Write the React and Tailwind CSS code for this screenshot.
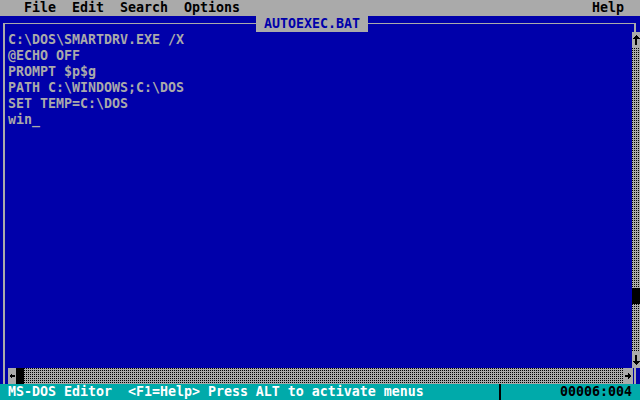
import React from "react";

const lines = [
  "C:\\DOS\\SMARTDRV.EXE /X",
  "@ECHO OFF",
  "PROMPT $p$g",
  "PATH C:\\WINDOWS;C:\\DOS",
  "SET TEMP=C:\\DOS",
  "win_",
];

function Dots({ className }) {
  return (
    <div
      className={
        "bg-[#aaaaaa] bg-[conic-gradient(at_1px_1px,#aaaaaa_270deg,#000000_0)] bg-[length:2px_2px] " +
        (className || "")
      }
    />
  );
}

function VLine({ color }) {
  return (
    <div className="w-2 h-full pl-[3px] shrink-0">
      <div className={"w-[2px] h-full " + color} />
    </div>
  );
}

function Arrow({ dir }) {
  const shapes = {
    up: (
      <>
        <polygon points="4,3 8,7 0,7" />
        <rect x="3" y="7" width="2" height="6" />
      </>
    ),
    down: (
      <>
        <rect x="3" y="3" width="2" height="6" />
        <polygon points="0,9 8,9 4,13" />
      </>
    ),
    left: (
      <>
        <polygon points="1,8 4,5 4,11" />
        <rect x="4" y="7" width="3" height="2" />
      </>
    ),
    right: (
      <>
        <rect x="1" y="7" width="3" height="2" />
        <polygon points="7,8 4,5 4,11" />
      </>
    ),
  };
  return (
    <svg width="8" height="16" viewBox="0 0 8 16" shapeRendering="crispEdges" fill="#000">
      {shapes[dir]}
    </svg>
  );
}

export default function App() {
  return (
    <div className="w-[640px] h-[400px] overflow-hidden bg-[#0000aa] font-['DejaVu_Sans_Mono',monospace] font-bold text-[13.29px] leading-4 flex flex-col">
      {/* Menu bar */}
      <div className="h-4 bg-[#aaaaaa] text-black flex whitespace-pre shrink-0">
        <span className="flex-1">{"   File  Edit  Search  Options"}</span>
        <span>{"Help  "}</span>
      </div>

      {/* Title row */}
      <div className="h-4 flex shrink-0">
        <div className="w-[256px] pl-[3px] pt-[7px]">
          <div className="h-full border-t border-l-2 border-[#aaaaaa]" />
        </div>
        <div className="w-[112px] bg-[#aaaaaa] text-[#0000aa] whitespace-pre">{" AUTOEXEC.BAT "}</div>
        <div className="flex-1 pr-[4px] pt-[7px]">
          <div className="h-full border-t border-r-2 border-[#aaaaaa]" />
        </div>
      </div>

      {/* Editor body */}
      <div className="h-[336px] flex shrink-0">
        <VLine color="bg-[#aaaaaa]" />
        <div className="flex-1 text-[#aaaaaa] whitespace-pre">
          {lines.map((l, i) => (
            <div key={i} className="h-4">
              {l}
            </div>
          ))}
        </div>
        <div className="w-2 flex flex-col shrink-0">
          <div className="h-4 bg-[#aaaaaa]">
            <Arrow dir="up" />
          </div>
          <Dots className="h-[240px]" />
          <div className="h-4 bg-black" />
          <Dots className="h-[48px]" />
          <div className="h-4 bg-[#aaaaaa]">
            <Arrow dir="down" />
          </div>
        </div>
      </div>

      {/* Horizontal scrollbar */}
      <div className="h-4 flex shrink-0">
        <VLine color="bg-[#aaaaaa]" />
        <div className="w-2 bg-[#aaaaaa]">
          <Arrow dir="left" />
        </div>
        <div className="w-2 bg-black" />
        <Dots className="flex-1" />
        <div className="w-2 bg-[#aaaaaa]">
          <Arrow dir="right" />
        </div>
        <div className="w-2 flex">
          <div className="w-px bg-[#aaaaaa]" />
          <div className="w-[2px] ml-px bg-[#aaaaaa]" />
        </div>
      </div>

      {/* Status bar */}
      <div className="h-4 bg-[#00aaaa] flex whitespace-pre shrink-0">
        <div className="w-[496px] text-white">{" MS-DOS Editor  <F1=Help> Press ALT to activate menus"}</div>
        <VLine color="bg-black" />
        <div className="flex-1" />
        <div className="text-black pr-2">00006:004</div>
      </div>
    </div>
  );
}
